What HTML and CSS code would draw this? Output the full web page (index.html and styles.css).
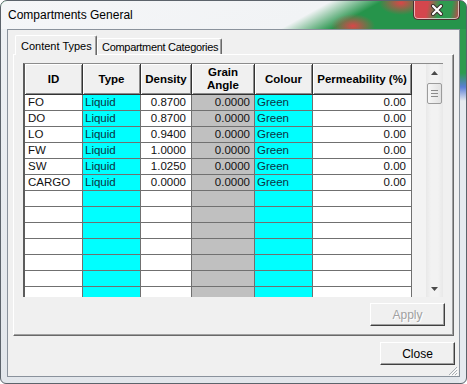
FILE: index.html
```html
<!DOCTYPE html>
<html lang="en">
<head>
  <meta charset="UTF-8">
  <title>Compartments General</title>
  <link rel="stylesheet" href="styles.css">
</head>
<body>

  <div class="window">
    <div class="titlebar">
      <span class="title">Compartments General</span>
      <div class="close-btn">
        <svg width="14" height="12" viewBox="0 0 14 12">
          <path d="M3 2 L11 10 M11 2 L3 10" stroke="#3a2a2a" stroke-width="4" stroke-linecap="round"/>
          <path d="M3 2 L11 10 M11 2 L3 10" stroke="#fff" stroke-width="2.2" stroke-linecap="round"/>
        </svg>
      </div>
    </div>

    <div class="client">
      <div class="tabs">
        <div class="tab active">Content Types</div>
        <div class="tab">Compartment Categories</div>
      </div>

      <div class="panel">
        <div class="grid">
          <div class="grid-table">
            <div class="row head">
              <div class="hcell">ID</div>
              <div class="hcell">Type</div>
              <div class="hcell">Density</div>
              <div class="hcell">Grain<br>Angle</div>
              <div class="hcell">Colour</div>
              <div class="hcell">Permeability (%)</div>
            </div>
            <div class="row">
              <div class="cell id">FO</div><div class="cell cyan">Liquid</div><div class="cell num">0.8700</div>
              <div class="cell num silver">0.0000</div><div class="cell cyan">Green</div><div class="cell num">0.00</div>
            </div>
            <div class="row">
              <div class="cell id">DO</div><div class="cell cyan">Liquid</div><div class="cell num">0.8700</div>
              <div class="cell num silver">0.0000</div><div class="cell cyan">Green</div><div class="cell num">0.00</div>
            </div>
            <div class="row">
              <div class="cell id">LO</div><div class="cell cyan">Liquid</div><div class="cell num">0.9400</div>
              <div class="cell num silver">0.0000</div><div class="cell cyan">Green</div><div class="cell num">0.00</div>
            </div>
            <div class="row">
              <div class="cell id">FW</div><div class="cell cyan">Liquid</div><div class="cell num">1.0000</div>
              <div class="cell num silver">0.0000</div><div class="cell cyan">Green</div><div class="cell num">0.00</div>
            </div>
            <div class="row">
              <div class="cell id">SW</div><div class="cell cyan">Liquid</div><div class="cell num">1.0250</div>
              <div class="cell num silver">0.0000</div><div class="cell cyan">Green</div><div class="cell num">0.00</div>
            </div>
            <div class="row">
              <div class="cell id">CARGO</div><div class="cell cyan">Liquid</div><div class="cell num">0.0000</div>
              <div class="cell num silver">0.0000</div><div class="cell cyan">Green</div><div class="cell num">0.00</div>
            </div>
            <div class="row"><div class="cell"></div><div class="cell cyan"></div><div class="cell"></div><div class="cell silver"></div><div class="cell cyan"></div><div class="cell"></div></div>
            <div class="row"><div class="cell"></div><div class="cell cyan"></div><div class="cell"></div><div class="cell silver"></div><div class="cell cyan"></div><div class="cell"></div></div>
            <div class="row"><div class="cell"></div><div class="cell cyan"></div><div class="cell"></div><div class="cell silver"></div><div class="cell cyan"></div><div class="cell"></div></div>
            <div class="row"><div class="cell"></div><div class="cell cyan"></div><div class="cell"></div><div class="cell silver"></div><div class="cell cyan"></div><div class="cell"></div></div>
            <div class="row"><div class="cell"></div><div class="cell cyan"></div><div class="cell"></div><div class="cell silver"></div><div class="cell cyan"></div><div class="cell"></div></div>
            <div class="row"><div class="cell"></div><div class="cell cyan"></div><div class="cell"></div><div class="cell silver"></div><div class="cell cyan"></div><div class="cell"></div></div>
            <div class="row"><div class="cell"></div><div class="cell cyan"></div><div class="cell"></div><div class="cell silver"></div><div class="cell cyan"></div><div class="cell"></div></div>
          </div>

          <div class="vscroll">
            <div class="sb-btn">
              <svg width="7" height="4" viewBox="0 0 7 4"><path d="M0 4 L3.5 0 L7 4 Z" fill="#4a4a4a"/></svg>
            </div>
            <div class="sb-thumb">
              <svg width="7" height="7" viewBox="0 0 7 7">
                <path d="M0 0.5 H7 M0 3.5 H7 M0 6.5 H7" stroke="#8a8a8a" stroke-width="1"/>
              </svg>
            </div>
            <div class="sb-btn sb-down">
              <svg width="7" height="4" viewBox="0 0 7 4"><path d="M0 0 L7 0 L3.5 4 Z" fill="#4a4a4a"/></svg>
            </div>
          </div>
        </div>

        <div class="panel-actions">
          <button class="btn" disabled>Apply</button>
        </div>
      </div>

      <div class="dialog-actions">
        <button class="btn">Close</button>
      </div>

      <div class="grip-row">
        <svg width="10" height="10" viewBox="0 0 10 10">
          <path d="M9 1 L1 9 M9 4 L4 9 M9 7 L7 9" stroke="#a8adb3" stroke-width="1"/>
          <path d="M10 2 L2 10 M10 5 L5 10 M10 8 L8 10" stroke="#fff" stroke-width="1"/>
        </svg>
      </div>
    </div>
  </div>

</body>
</html>
```

FILE: styles.css
```css
* {
  box-sizing: border-box;
}

html, body {
  margin: 0;
  padding: 0;
}

body {
  width: 467px;
  height: 384px;
  overflow: hidden;
  font-family: "Liberation Sans", Arial, sans-serif;
  font-size: 11px;
  color: #000;
  background: #fff;
}

.window {
  width: 467px;
  height: 384px;
  border: 1px solid #5c636b;
  border-radius: 7px 7px 6px 6px;
  display: flex;
  flex-direction: column;
  overflow: hidden;
  background-color: #e6eaef;
  background-image:
    linear-gradient(#2d9b4e 0, #2d9b4e 72px, #5b7fd6 86px, #e6eaef 100px),
    linear-gradient(#eef1f4, #e2e6eb);
  background-size: 7px 100%, 100% 100%;
  background-position: right top, 0 0;
  background-repeat: no-repeat;
}

/* title bar */
.titlebar {
  height: 28px;
  flex: none;
  display: flex;
  align-items: flex-start;
  background-color: #26944b;
  background-image:
    radial-gradient(ellipse 22px 12px at 352px 25px, rgba(226, 66, 72, 0.95), rgba(226, 66, 72, 0)),
    radial-gradient(ellipse 22px 12px at 400px 2px, rgba(226, 66, 72, 0.95), rgba(226, 66, 72, 0)),
    linear-gradient(151deg, #f5f6f8 0, #f1f3f5 160px, rgba(241, 243, 245, 0) 185px);
}

.title {
  font-size: 12px;
  line-height: 14px;
  padding: 7px 0 0 7px;
}

.close-btn {
  flex: none;
  margin: -1px 6px 0 auto;
  width: 47px;
  height: 20px;
  border: 1px solid #4a3030;
  border-top: none;
  border-radius: 0 0 5px 5px;
  box-shadow: inset 0 0 0 1px rgba(255, 255, 255, 0.6);
  background-color: #c8424a;
  background-image: linear-gradient(100deg, #d4464d 0, #d4464d 30%, #2f9a50 55%, #2f9a50 80%, #c8424a 100%);
  display: flex;
  align-items: center;
  justify-content: center;
}

/* client area */
.client {
  flex: 1;
  margin: 0 6px 6px;
  border: 1px solid #8a929c;
  background: #f0f0f0;
  display: flex;
  flex-direction: column;
  padding: 5px 4px 0 5px;
}

.tabs {
  position: relative;
  z-index: 1;
  height: 19px;
  flex: none;
  display: flex;
  align-items: flex-end;
  padding-left: 2px;
}

.tab {
  height: 16px;
  width: 125px;
  padding: 1px 0 0 4px;
  line-height: 14px;
  letter-spacing: -0.3px;
  background: #f0f0f0;
  border: 1px solid;
  border-color: #fff #696969 transparent #fff;
  border-bottom: none;
  border-radius: 2px 2px 0 0;
  box-shadow: inset -1px 0 #a0a0a0;
  white-space: nowrap;
}

.tab.active {
  width: 82px;
  height: 20px;
  margin-bottom: -1px;
  padding: 3px 0 0 5px;
  letter-spacing: 0;
}

.panel {
  width: 441px;
  height: 282px;
  flex: none;
  border: 1px solid;
  border-color: #fff #696969 #696969 #fff;
  box-shadow: inset -1px -1px #a0a0a0;
  display: flex;
  flex-direction: column;
  padding: 8px 8px 9px 9px;
}

/* grid */
.grid {
  width: 420px;
  height: 234px;
  flex: none;
  display: flex;
  overflow: hidden;
  border-top: 1px solid #8c8c8c;
  border-left: 2px solid #5c5c5c;
}

.grid-table {
  flex: 1;
  display: flex;
  flex-direction: column;
  overflow: hidden;
  background: #f3f3f3;
}

.row {
  display: grid;
  grid-template-columns: 58px 58px 51px 63px 58px 99px;
  height: 16px;
  flex: none;
}

.row.head {
  height: 31px;
}

.hcell {
  background: #f0f0f0;
  border-right: 1px solid #333;
  border-bottom: 1px solid #333;
  box-shadow: inset 1px 1px #fff, inset -1px -1px #8a8a8a;
  font-weight: bold;
  font-size: 11.5px;
  line-height: 13px;
  display: flex;
  align-items: center;
  justify-content: center;
  text-align: center;
  white-space: nowrap;
}

.cell {
  background: #fff;
  border-right: 1px solid #707070;
  border-bottom: 1px solid #707070;
  padding: 0 2px;
  font-size: 11.5px;
  line-height: 15px;
  white-space: nowrap;
  overflow: hidden;
  color: #111;
}

.cell.id {
  padding-left: 3px;
}

.cell.num {
  text-align: right;
  padding-right: 5px;
}

.cell.cyan {
  background: #00ffff;
  color: #0b3444;
}

.cell.silver {
  background: #c0c0c0;
  padding-right: 4px;
}

/* scrollbar */
.vscroll {
  width: 17px;
  flex: none;
  display: flex;
  flex-direction: column;
  align-items: stretch;
  background: linear-gradient(to right, #e8e8e8, #f2f2f2 30%, #f2f2f2 70%, #e8e8e8);
}

.sb-btn {
  height: 17px;
  flex: none;
  display: flex;
  align-items: center;
  justify-content: center;
}

.sb-down {
  margin-top: auto;
}

.sb-thumb {
  height: 21px;
  margin: 2px 1px 0;
  border: 1px solid #9c9c9c;
  border-radius: 2px;
  background: linear-gradient(to right, #f6f6f6, #e2e2e2);
  display: flex;
  align-items: center;
  justify-content: center;
}

/* buttons */
.panel-actions {
  margin-top: 6px;
  display: flex;
  justify-content: flex-end;
}

.dialog-actions {
  margin-top: 6px;
  display: flex;
  justify-content: flex-end;
}

.btn {
  width: 75px;
  height: 23px;
  padding: 0;
  font-family: "Liberation Sans", Arial, sans-serif;
  font-size: 12px;
  color: #000;
  background: #f0f0f0;
  border: 1px solid;
  border-color: #fff #404040 #404040 #fff;
  box-shadow: inset -1px -1px #a0a0a0;
}

.btn:disabled {
  color: #a0a0a0;
  text-shadow: 1px 1px #fff;
}

.grip-row {
  height: 11px;
  flex: none;
  display: flex;
  justify-content: flex-end;
  align-items: flex-end;
  margin-right: -3px;
}
```
